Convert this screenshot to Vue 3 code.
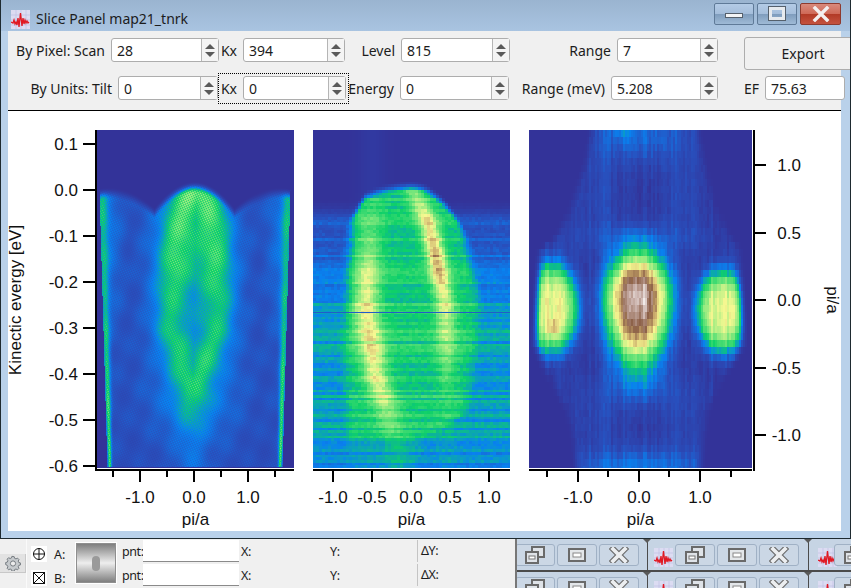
<script setup>
import { ref, onMounted } from 'vue'

const row1 = [
  { label: 'By Pixel: Scan', lw: 103, value: '28', w: 108 },
  { label: 'Kx', lw: 24, value: '394', w: 102 },
  { label: 'Level', lw: 56, value: '815', w: 109 },
  { label: 'Range', lw: 107, value: '7', w: 101 }
]
const row2 = [
  { label: 'By Units: Tilt', lw: 110, value: '0', w: 100 },
  { label: 'Kx', lw: 25, value: '0', w: 103, focus: true },
  { label: 'Energy', lw: 54, value: '0', w: 109 },
  { label: 'Range (meV)', lw: 102, value: '5.208', w: 107 },
  { label: 'EF', lw: 47, value: '75.63', w: 80, plain: true }
]

const eTicks = [['0.1', 33], ['0.0', 79], ['-0.1', 125], ['-0.2', 171], ['-0.3', 217], ['-0.4', 263], ['-0.5', 309], ['-0.6', 355]]
const yTicks = [['1.0', 54], ['0.5', 122], ['0.0', 189], ['-0.5', 257], ['-1.0', 324]]
const plots = [
  { w: 197, h: 338, major: [43, 97, 151], minor: [16, 70, 124, 178], labels: [['-1.0', 43], ['0.0', 97], ['1.0', 151]] },
  { w: 197, h: 338, major: [20, 59, 98, 137, 176], minor: [], labels: [['-1.0', 20], ['-0.5', 59], ['0.0', 98], ['0.5', 137], ['1.0', 176]] },
  { w: 223, h: 338, major: [49, 110, 171], minor: [18, 79, 140, 202], labels: [['-1.0', 49], ['0.0', 110], ['1.0', 171]] }
]

const dockCells = [
  { w: 130, icon: false }, { w: 160, icon: true }, { w: 43, icon: true },
  { w: 130, icon: false }, { w: 160, icon: true }, { w: 43, icon: true }
]

const canvases = ref([])

// colour table of the intensity scale
const stops = [
  [0, 51, 51, 153], [0.14, 40, 80, 190], [0.27, 8, 130, 240], [0.42, 14, 208, 105],
  [0.56, 130, 232, 125], [0.68, 246, 248, 145], [0.77, 205, 175, 110], [0.85, 140, 96, 72],
  [0.93, 200, 175, 168], [1, 255, 255, 255]
]
function cmap(t) {
  t = Math.max(0, Math.min(1, t))
  for (let i = 1; i < stops.length; i++) {
    if (t <= stops[i][0]) {
      const a = stops[i - 1], b = stops[i]
      const f = (t - a[0]) / (b[0] - a[0])
      return [a[1] + (b[1] - a[1]) * f, a[2] + (b[2] - a[2]) * f, a[3] + (b[3] - a[3]) * f]
    }
  }
  return [255, 255, 255]
}

const smooth = (a, b, x) => {
  const f = Math.max(0, Math.min(1, (x - a) / (b - a)))
  return f * f * (3 - 2 * f)
}
const gauss = (d, s) => Math.exp(-(d * d) / (s * s))
function lerpPath(path, y) {
  if (y <= path[0][0]) return path[0][1]
  for (let i = 1; i < path.length; i++) {
    if (y <= path[i][0]) {
      const f = (y - path[i - 1][0]) / (path[i][0] - path[i - 1][0])
      return path[i - 1][1] + (path[i][1] - path[i - 1][1]) * f
    }
  }
  return path[path.length - 1][1]
}
function rng(seed) {
  let s = seed
  return () => {
    s = (s * 1664525 + 1013904223) >>> 0
    return s / 4294967296
  }
}

const archW = [[54, 0], [75, 14], [110, 22], [170, 25], [200, 24], [255, 4], [300, 0]]

function slice1(u, v) {
  const d = u - 97
  const top = Math.min(54 + 26 * (d / 40) ** 2, 60 + 20 * ((Math.abs(d) - 85) / 45) ** 2)
  const mask = smooth(top - 3, top + 9, v)
  const uL = 3 + ((v - 60) * 8) / 280
  const uR = 192 - ((v - 60) * 8) / 280
  if (u < uL - 1 || u > uR + 1 || v > 336) return 0
  const w = lerpPath(archW, v)
  const cx = 97 - (v - 170) * 0.02
  const fall = 1 - 0.6 * smooth(230, 320, v)
  const arch = gauss(Math.abs(u - cx) - w, 16) * 0.17 * fall
  const fill = 0.09 * gauss(d, 30) * (1 - smooth(120, 190, v))
  const broad = 0.16 * gauss(d, 46) * (1 - 0.75 * smooth(260, 335, v))
  const wid = 1.8 + (1 - v / 340) * 5
  const edge = gauss(u - uL - 1.5, wid) + gauss(u - uR + 1.5, wid)
  const outer = 0.11 * smooth(62, 88, Math.abs(d)) * (1 - 0.8 * smooth(100, 260, v))
  const blot = 0.012 * Math.sin(u * 0.23 + v * 0.09) + 0.012 * Math.sin(v * 0.17 - u * 0.11)
  let t = 0.115 + arch + fill + broad + outer + blot + edge * (0.16 + 0.17 * smooth(120, 300, v))
  t *= 1 + 0.17 * Math.sin(u * 1.95 + v * 0.72) * Math.sin(u * 0.72 - v * 1.95)
  return t * mask
}

function drawSlice1(ctx, w, h) {
  paint(ctx, w, h, (x, y) => slice1(x, y))
}

function drawSlice2(ctx, w, h) {
  const rows = Math.ceil(h / 2.7) + 1
  const r = rng(17)
  const rowGain = Array.from({ length: rows }, () => (r() - 0.5))
  const rowB = Array.from({ length: rows }, () => Array.from({ length: 70 }, () => r() - 0.5))
  const bandL = [[190, 372], [270, 368], [310, 366], [375, 376], [400, 384], [450, 398]]
  const ampL = [[195, 0.03], [240, 0.14], [270, 0.22], [300, 0.27], [380, 0.27], [410, 0.15], [440, 0.05]]
  const bandR = [[185, 412], [220, 428], [250, 435], [300, 445], [370, 447], [440, 447]]
  const ampR = [[185, 0.12], [220, 0.3], [255, 0.37], [290, 0.28], [320, 0.2], [360, 0.12], [400, 0.03]]
  const leftE = [[190, 358], [220, 352], [300, 348], [350, 345], [440, 350]]
  const rightE = [[190, 452], [220, 462], [300, 478], [370, 472], [410, 465], [440, 420]]
  paint(ctx, w, h, (px, py) => {
    const col = Math.floor(px / 3)
    const row = Math.floor(py / 2.7)
    const X = 313 + col * 3 + 1.5
    const Y = 130 + row * 2.7
    const top = X < 412
      ? (X >= 365 ? 182 + ((412 - X) / 47) ** 2 * 10 : 192 + (365 - X) * 1.5)
      : 182 + ((X - 412) / 43) ** 2 * 30
    const lE = lerpPath(leftE, Y), rE = lerpPath(rightE, Y)
    const dome = smooth(top - 3, top + 9, Y) * smooth(lE - 9, lE + 7, X) * (1 - smooth(rE - 7, rE + 9, X))
    const bottom = 1 - 0.3 * smooth(420, 465, Y)
    const bgStart = smooth(198, 225, Y)
    const bg = bgStart * (0.17 + 0.15 * smooth(220, 330, Y)) * (1 - 0.2 * smooth(435, 468, Y))
    let t = bg * (1 - dome) + dome * 0.42 * bottom
    t += gauss(X - lerpPath(bandL, Y), 13) * lerpPath(ampL, Y)
    t += gauss(X - lerpPath(bandR, Y), 10) * lerpPath(ampR, Y) * smooth(top, top + 8, Y)
    const amt = Math.max(bgStart, dome)
    t += amt * (rowGain[row] * 0.11 + rowB[row][col] * 0.05)
    if (py === 182) t = 0.17
    return t
  })
}

function drawSlice3(ctx, w, h) {
  const r = rng(91)
  const colN = Array.from({ length: 130 }, () => r() - 0.5)
  const cell = Array.from({ length: 60 }, () => Array.from({ length: 130 }, () => r() - 0.5))
  const leftB = [[130, 590], [160, 585], [200, 572], [235, 556], [250, 537], [345, 533], [360, 538], [380, 548], [410, 565], [440, 572], [468, 575]]
  const rightB = [[130, 700], [160, 705], [200, 715], [235, 730], [250, 742], [345, 746], [360, 738], [380, 723], [410, 710], [440, 705], [468, 703]]
  paint(ctx, w, h, (px, py) => {
    const col = Math.floor(px / 2)
    const row = Math.floor(py / 7)
    const X = 529 + col * 2 + 1
    const Y = 130 + row * 7 + 3.5
    const l = lerpPath(leftB, Y), ri = lerpPath(rightB, Y)
    if (X < l - 3 || X > ri + 3) return 0
    const env = smooth(l - 3, l + 8, X) * (1 - smooth(ri - 8, ri + 3, X))
    const dy0 = Y - 298
    const r0 = ((X - 638) / 38) ** 2 + (dy0 / (dy0 < 0 ? 54 : 80)) ** 2
    const r1 = ((X - 551) / 30) ** 2 + ((Y - 308) / 50) ** 2
    const r2 = ((X - 722) / 28) ** 2 + ((Y - 311) / 46) ** 2
    let t = 0.88 * Math.exp(-(r0 ** 1.5) * 1.35)
    t += 0.04 * gauss(X - 640, 8) * gauss(Y - 296, 12)
    t += 0.63 * Math.exp(-(r1 * r1) * 1.2)
    t += 0.63 * Math.exp(-(r2 * r2) * 1.2)
    t += 0.14 * gauss(X - 553, 5) * gauss(Y - 328, 8)
    t += 0.04
    // faint bands above and below the three lobes
    t += 0.17 * gauss(X - 640, 55) * gauss(Y - 135, 28)
    t += 0.1 * gauss(X - 622, 10) * gauss(Y - 130, 10)
    t += 0.07 * (gauss(X - 600, 22) + gauss(X - 680, 22)) * gauss(Y - 195, 45)
    t += 0.1 * gauss(X - 640, 70) * gauss(Y - 238, 16)
    t += 0.1 * gauss(X - 640, 50) * gauss(Y - 388, 18)
    t += 0.06 * (gauss(X - 600, 25) + gauss(X - 680, 25)) * gauss(Y - 420, 30)
    t += 0.21 * gauss(X - 640, 75) * gauss(Y - 468, 20)
    t += 0.07 * colN[col] + 0.04 * (cell[row] ? cell[row][col] : 0)
    return t * env
  })
}

function paint(ctx, w, h, fn) {
  const img = ctx.createImageData(w, h)
  for (let y = 0; y < h; y++) {
    for (let x = 0; x < w; x++) {
      const c = cmap(fn(x, y))
      const i = (y * w + x) * 4
      img.data[i] = c[0]
      img.data[i + 1] = c[1]
      img.data[i + 2] = c[2]
      img.data[i + 3] = 255
    }
  }
  ctx.putImageData(img, 0, 0)
}

onMounted(() => {
  const draw = [drawSlice1, drawSlice2, drawSlice3]
  canvases.value.forEach((c, i) => draw[i](c.getContext('2d'), c.width, c.height))
})
</script>

<template>
  <div class="screen">
    <svg class="defs" width="0" height="0">
      <symbol id="wave" viewBox="0 0 19 19">
        <rect width="19" height="19" fill="#dcdcf2" />
        <path d="M0 5h19M0 10h19M0 15h19M5 0v19M10 0v19M15 0v19" stroke="#bcbce0" stroke-width=".6" />
        <path d="M0 12l2 1 1-3 1 4 1-2 1 3 1-7 1 9 1.5-14 1.5 13 1-8 1 6 1-4 1 3 1-2 1 2 1-1" fill="none" stroke="#e01822" stroke-width="1.3" />
      </symbol>
    </svg>

    <div class="window">
      <header class="title">
        <svg class="title-icon" width="19" height="19"><use href="#wave" /></svg>
        <span class="title-text">Slice Panel map21_tnrk</span>
        <div class="caption">
          <button class="cap cap-min"><i></i></button>
          <button class="cap cap-max"><i></i></button>
          <button class="cap cap-close">
            <svg width="20" height="16" viewBox="0 0 20 16"><path d="M4 2l12 12M16 2L4 14" stroke="#f4f0f0" stroke-width="3.4" stroke-linecap="square" /></svg>
          </button>
        </div>
      </header>

      <div class="toolbar">
        <div class="row row-a">
          <div v-for="f in row1" :key="f.label" class="field">
            <label :style="{ width: f.lw + 'px' }">{{ f.label }}</label>
            <div class="spin" :style="{ width: f.w + 'px' }">
              <span class="val">{{ f.value }}</span>
              <span class="arrows"><i class="up"></i><i class="down"></i></span>
            </div>
          </div>
          <button class="export">Export</button>
        </div>
        <div class="row">
          <div v-for="f in row2" :key="f.label" class="field" :class="{ focus: f.focus }">
            <label :style="{ width: f.lw + 'px' }">{{ f.label }}</label>
            <div class="spin" :style="{ width: f.w + 'px' }">
              <span class="val">{{ f.value }}</span>
              <span v-if="!f.plain" class="arrows"><i class="up"></i><i class="down"></i></span>
            </div>
          </div>
        </div>
      </div>

      <div class="plots">
        <svg class="axis-side" width="89" height="420">
          <rect x="87" y="19" width="2" height="341" />
          <g v-for="t in eTicks" :key="t[0]">
            <rect x="75" :y="t[1] - 1" width="12" height="2" />
            <text x="70" :y="t[1] + 6" text-anchor="end">{{ t[0] }}</text>
          </g>
          <text transform="translate(13 189) rotate(-90)" text-anchor="middle">Kinectic evergy [eV]</text>
        </svg>

        <div v-for="p in plots" :key="p.w + p.major.length" class="plot">
          <canvas ref="canvases" :width="p.w" :height="p.h"></canvas>
          <svg :width="p.w" height="63">
            <rect x="0" y="1" :width="p.w" height="2" />
            <rect v-for="m in p.major" :key="m" :x="m - 1" y="2" width="2" height="12" />
            <rect v-for="m in p.minor" :key="m" :x="m - 1" y="2" width="2" height="7" />
            <text v-for="l in p.labels" :key="l[0]" :x="l[1]" y="35" text-anchor="middle">{{ l[0] }}</text>
            <text :x="p.w / 2" y="57" text-anchor="middle">pi/a</text>
          </svg>
        </div>

        <svg class="axis-side" width="89" height="420">
          <rect x="1" y="19" width="2" height="341" />
          <g v-for="t in yTicks" :key="t[0]">
            <rect x="3" :y="t[1] - 1" width="11" height="2" />
            <text x="49" :y="t[1] + 6" text-anchor="end">{{ t[0] }}</text>
          </g>
          <text transform="translate(75 189) rotate(90)" text-anchor="middle">pi/a</text>
        </svg>
      </div>
    </div>

    <div class="dock">
      <div class="gear-col">
        <button class="gear">
          <svg width="16" height="16" viewBox="0 0 16 16">
            <path d="M8 1.5l1.2.2.4 1.6 1.4.6 1.5-.8 1.5 1.5-.8 1.5.6 1.4 1.6.4v2.1l-1.6.4-.6 1.4.8 1.5-1.5 1.5-1.5-.8-1.4.6-.4 1.6H6.9l-.4-1.6-1.4-.6-1.5.8-1.5-1.5.8-1.5-.6-1.4L.7 9.6V7.5l1.6-.4.6-1.4-.8-1.5 1.5-1.5 1.5.8 1.4-.6.4-1.6z" fill="#c6cacd" stroke="#6c7378" stroke-width=".9" />
            <circle cx="8" cy="8.5" r="2.6" fill="#ececec" stroke="#6c7378" stroke-width=".9" />
          </svg>
        </button>
      </div>
      <div class="ab-col">
        <div class="ab">
          <span class="mark">
            <svg width="12" height="12" viewBox="0 0 12 12"><circle cx="6" cy="6" r="5.5" fill="none" stroke="#111" /><path d="M6 0v12M0 6h12" stroke="#111" /></svg>
          </span>
          <span>A:</span>
        </div>
        <div class="ab">
          <span class="mark">
            <svg width="12" height="12" viewBox="0 0 12 12"><rect x=".5" y=".5" width="11" height="11" fill="none" stroke="#111" /><path d="M0 0l12 12M12 0L0 12" stroke="#111" /></svg>
          </span>
          <span>B:</span>
        </div>
      </div>
      <div class="thumb"><i></i></div>
      <div class="readout">
        <span>pnt:</span><span class="pnt"></span><span>X:</span><span>Y:</span><span class="delta">ΔY:</span>
        <span>pnt:</span><span class="pnt"></span><span>X:</span><span>Y:</span><span class="delta">ΔX:</span>
      </div>
      <div class="mdi">
        <div v-for="(c, i) in dockCells" :key="i" class="cell" :style="{ width: c.w + 'px' }">
          <svg v-if="c.icon" class="cell-icon" width="19" height="19"><use href="#wave" /></svg>
          <button class="mbtn">
            <svg width="22" height="20" viewBox="0 0 22 20">
              <rect x="8" y="2" width="12" height="10" fill="#dfe3e8" stroke="#6a6a6a" stroke-width="2" />
              <rect x="2" y="7" width="12" height="11" fill="#dfe3e8" stroke="#6a6a6a" stroke-width="2" />
              <rect x="5" y="11" width="6" height="3" fill="#fff" stroke="#777" />
            </svg>
          </button>
          <button class="mbtn">
            <svg width="20" height="16" viewBox="0 0 20 16"><rect x="2" y="2" width="16" height="12" fill="#e4e7ea" stroke="#6a6a6a" stroke-width="2" /><rect x="6" y="6" width="8" height="4" fill="#fff" stroke="#888" /></svg>
          </button>
          <button class="mbtn">
            <svg width="20" height="16" viewBox="0 0 20 16"><path d="M4 2l12 12M16 2L4 14" stroke="#6a6a6a" stroke-width="6" stroke-linecap="square" /><path d="M4 2l12 12M16 2L4 14" stroke="#eceef0" stroke-width="3.8" stroke-linecap="square" /></svg>
          </button>
        </div>
      </div>
    </div>
  </div>
</template>

<style>
html, body {
  margin: 0;
  background: #f0f0f0;
}
</style>

<style scoped>
.screen {
  width: 851px;
  height: 588px;
  overflow: hidden;
  font-family: "Noto Sans", sans-serif;
  color: #1c1c1c;
}
.defs {
  position: absolute;
}
.window {
  box-sizing: border-box;
  height: 539px;
  padding: 0 9px 7px 7px;
  border: 1px solid #1e2a30;
  border-top: none;
  background: linear-gradient(#9ab4d0 0, #a9c4e1 31px, #b9d1ea 31px);
  overflow: hidden;
}
.title {
  display: flex;
  align-items: center;
  height: 31px;
}
.title-icon {
  margin: 7px 0 0 3px;
}
.title-text {
  margin: 5px 0 0 6px;
  font-size: 14px;
}
.caption {
  display: flex;
  gap: 3px;
  margin-left: auto;
  margin-bottom: 4px;
}
.cap {
  display: flex;
  align-items: center;
  justify-content: center;
  width: 40px;
  height: 22px;
  padding: 0;
  border: 1px solid #5f7a98;
  border-radius: 2px;
  background: linear-gradient(#b3cbe6 0, #a5bedb 48%, #7f9dbd 52%, #9fbad6 100%);
}
.cap-close {
  width: 41px;
  border-color: #8e3a2e;
  background: linear-gradient(#d98a7c 0, #cf6a58 48%, #b23a26 52%, #c4523e 100%);
}
.cap-min i {
  display: block;
  width: 16px;
  height: 3px;
  margin-top: 4px;
  background: #f2f4f6;
  border: 1px solid #55606c;
}
.cap-max i {
  display: block;
  box-sizing: border-box;
  width: 16px;
  height: 13px;
  border: 3px solid #e6eaee;
  outline: 1px solid #55606c;
}
.toolbar {
  box-sizing: border-box;
  height: 80px;
  padding-top: 6px;
  background: #f0f0f0;
  border-bottom: 1px solid #000;
  font-size: 14px;
}
.row {
  display: flex;
  align-items: flex-start;
}
.row-a {
  height: 39px;
}
.field {
  display: flex;
  align-items: center;
  position: relative;
}
.row-a .field {
  margin-top: 1px;
}
.field label {
  box-sizing: border-box;
  padding-right: 6px;
  text-align: right;
  white-space: nowrap;
}
.field.focus::after {
  content: "";
  position: absolute;
  left: 0;
  right: -3px;
  top: -3px;
  bottom: -4px;
  border: 1px dotted #000;
}
.spin {
  box-sizing: border-box;
  display: flex;
  align-items: center;
  height: 24px;
  background: #fff;
  border: 1px solid #adadad;
  border-radius: 3px;
}
.val {
  flex: 1;
  padding-left: 5px;
}
.arrows {
  display: flex;
  flex-direction: column;
  align-items: center;
  justify-content: center;
  gap: 3px;
  width: 16px;
  height: 100%;
  background: #f4f4f4;
  border-left: 1px solid #b5b5b5;
}
.arrows i {
  width: 0;
  height: 0;
  border-left: 5px solid transparent;
  border-right: 5px solid transparent;
}
.arrows .up {
  border-bottom: 5px solid #5a5a5a;
}
.arrows .down {
  border-top: 5px solid #5a5a5a;
}
.export {
  width: 110px;
  height: 33px;
  margin-left: 26px;
  flex: none;
  padding: 0 0 0 8px;
  background: #f0f0f0;
  border: 1px solid #adadad;
  border-radius: 3px;
  font: inherit;
  color: inherit;
}
.plots {
  display: flex;
  height: 420px;
  background: #fff;
}
.axis-side {
  flex: none;
}
.plot {
  display: flex;
  flex-direction: column;
  padding-top: 19px;
  margin-right: 19px;
}
.plot:nth-of-type(3) {
  margin-right: 0;
}
.plot canvas {
  display: block;
}
.plot svg {
  display: block;
}
svg text {
  font-family: "Liberation Sans", Arial, sans-serif;
  font-size: 17px;
  fill: #111;
}
.dock {
  display: flex;
  height: 49px;
  background: #f0f0f0;
  font-size: 12.5px;
}
.gear-col {
  flex: none;
  width: 27px;
  padding-top: 15px;
  border-right: 1px solid #fafafa;
  box-sizing: border-box;
}
.gear {
  display: flex;
  align-items: center;
  justify-content: center;
  width: 26px;
  height: 19px;
  padding: 0;
  background: #e2e2e2;
  border: none;
  border-bottom: 1px solid #c8c8c8;
  border-right: 1px solid #c8c8c8;
}
.ab-col {
  flex: none;
  width: 49px;
  padding: 3px 0 0 4px;
  box-sizing: border-box;
}
.ab {
  display: flex;
  align-items: center;
  gap: 7px;
  height: 24px;
}
.mark {
  display: flex;
  align-items: center;
  justify-content: center;
  width: 16px;
  height: 16px;
  background: #fff;
}
.thumb {
  box-sizing: border-box;
  position: relative;
  flex: none;
  width: 40px;
  height: 40px;
  margin-top: 4px;
  border: 1px solid #8f8f8f;
  outline: 1px solid #fff;
  background: linear-gradient(#7f7f7f, #eee 50%, #7f7f7f);
}
.thumb i {
  position: absolute;
  left: 15px;
  top: 12px;
  width: 8px;
  height: 15px;
  border-radius: 4px;
  background: #9a9a9a;
}
.readout {
  display: grid;
  grid-template-columns: 21px 96px 91px 87px 95px;
  grid-template-rows: 22px 22px;
  row-gap: 2px;
  align-items: center;
  flex: none;
  width: 394px;
  margin: 1px 0 0 6px;
}
.readout span {
  letter-spacing: -0.4px;
}
.readout span:nth-child(5n + 3) {
  padding-left: 2px;
}
.pnt {
  height: 21px;
  background: #fff;
  border-bottom: 1px solid #8a8a8a;
}
.delta {
  padding-left: 3px;
  border-left: 1px solid #c4c4c4;
  height: 100%;
  line-height: 22px;
}
.mdi {
  display: flex;
  flex-wrap: wrap;
  align-content: flex-start;
  flex: none;
  width: 335px;
  border-left: 2px solid #777;
  margin-left: -1px;
  overflow: hidden;
  background: #4b4b4b;
  column-gap: 1px;
  row-gap: 2px;
  height: 49px;
}
.cell {
  display: flex;
  align-items: flex-start;
  justify-content: flex-end;
  gap: 2px;
  box-sizing: border-box;
  flex: none;
  height: 31px;
  padding: 5px 8px 0 0;
  background: #c6d4e4;
  position: relative;
}
.cell:nth-child(3n + 2) {
  padding-right: 9px;
}
.cell:nth-child(3n) {
  justify-content: flex-start;
  padding: 5px 0 0 0;
}
.cell:nth-child(3n + 1)::after,
.cell:nth-child(3n + 2)::after {
  content: "";
  position: absolute;
  right: -4px;
  top: 0;
  width: 0;
  height: 0;
  border-left: 4px solid transparent;
  border-right: 4px solid transparent;
  border-top: 4px solid #5a5a5a;
  z-index: 1;
}
.cell-icon {
  flex: none;
  margin: 4px -5px 0 9px;
}
.cell:nth-child(3n + 2) .cell-icon {
  margin-right: auto;
  margin-left: 10px;
}
.mbtn {
  display: flex;
  align-items: center;
  justify-content: center;
  flex: none;
  width: 40px;
  height: 22px;
  padding: 0;
  background: #cbd7e5;
  border: 1px solid #a0b1c5;
  border-radius: 3px;
  position: relative;
}
</style>
